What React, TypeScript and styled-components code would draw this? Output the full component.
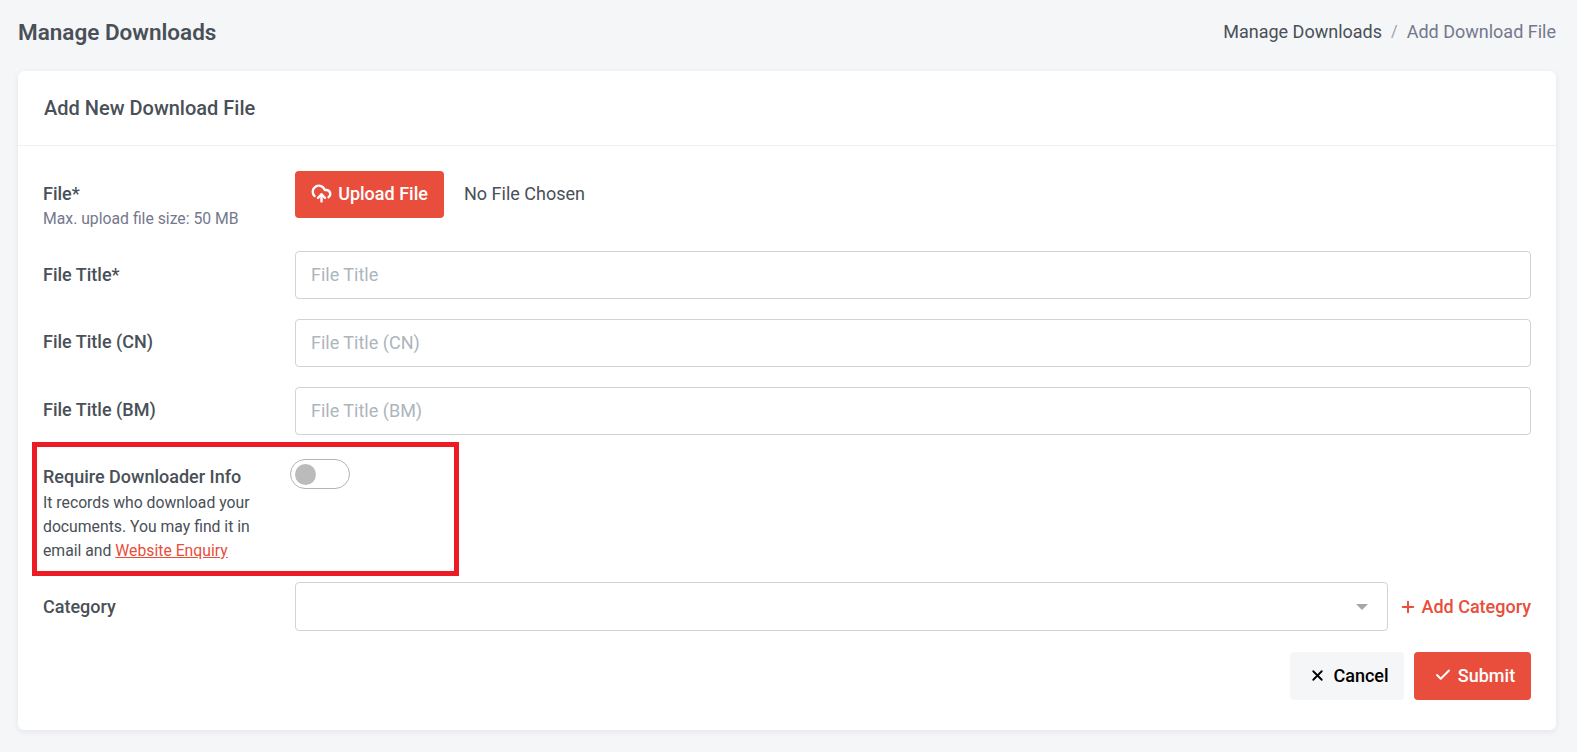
import React from "react";
import styled, { createGlobalStyle } from "styled-components";
import { Check, CloudUpload, Plus, X } from "lucide-react";

const GlobalStyle = createGlobalStyle`
  html, body {
    margin: 0;
    padding: 0;
    background: #f5f6f8;
    font-family: Roboto, "Liberation Sans", sans-serif;
    color: #495057;
  }
  * {
    box-sizing: border-box;
  }
`;

const Page = styled.div`
  height: 752px;
  overflow: hidden;
  padding: 0 21px 0 18px;
`;

const TopBar = styled.div`
  height: 71px;
  display: flex;
  align-items: center;
  justify-content: space-between;
  padding-bottom: 8px;
`;

const PageTitle = styled.h1`
  margin: 0;
  font-size: 22.5px;
  font-weight: 600;
  color: #495057;
`;

const Breadcrumb = styled.nav`
  display: flex;
  align-items: center;
  font-size: 18px;
  color: #495057;
`;

const CrumbSeparator = styled.span`
  padding: 0 9px;
  color: #9aa0ac;
  font-size: 16px;
`;

const CrumbCurrent = styled.span`
  color: #74788d;
`;

const Card = styled.section`
  background: #ffffff;
  border-radius: 6px;
  box-shadow: 0 2px 6px rgba(30, 40, 70, 0.08);
  height: 659px;
`;

const CardHeader = styled.header`
  height: 75px;
  padding: 0 26px;
  display: flex;
  align-items: center;
  border-bottom: 1px solid #eff0f3;
`;

const CardTitle = styled.h2`
  margin: 0;
  font-size: 20px;
  font-weight: 500;
  color: #495057;
`;

const CardBody = styled.div`
  padding: 25px 25px 30px;
`;

const Row = styled.div<{ $height: number }>`
  position: relative;
  display: grid;
  grid-template-columns: 252px 1fr;
  height: ${(props) => props.$height}px;
  align-items: start;
`;

const LabelColumn = styled.div<{ $top: number }>`
  padding: ${(props) => props.$top}px 22px 0 0;
`;

const FieldLabel = styled.label`
  display: block;
  font-size: 18px;
  font-weight: 500;
  line-height: 26px;
  color: #495057;
`;

const HelpText = styled.div`
  font-size: 15.75px;
  line-height: 24px;
  color: #74788d;
`;

const InfoText = styled.div`
  margin-top: 1px;
  font-size: 15.75px;
  line-height: 24px;
  color: #495057;
`;

const InfoLink = styled.a`
  color: #e94d3c;
  text-decoration: underline;
`;

const FileField = styled.div`
  display: flex;
  align-items: center;
  gap: 20px;
`;

const UploadButton = styled.button`
  height: 47px;
  width: 149px;
  display: flex;
  align-items: center;
  justify-content: center;
  gap: 6px;
  padding: 0 0 2px;
  border: none;
  border-radius: 4px;
  background: #e94d3c;
  color: #ffffff;
  font-family: inherit;
  font-size: 18px;
  font-weight: 500;
`;

const FileStatus = styled.span`
  margin-top: -2px;
  font-size: 18px;
  color: #495057;
`;

const TextInput = styled.input`
  width: 100%;
  height: 47.5px;
  border: 1px solid #ced4da;
  border-radius: 4px;
  padding: 0 15px;
  font-family: inherit;
  font-size: 18px;
  outline: none;

  &::placeholder {
    color: #adb5bd;
  }
`;

const ToggleTrack = styled.button`
  position: relative;
  display: block;
  width: 60px;
  height: 30px;
  margin: 4px 0 0 -5px;
  padding: 0;
  background: #ffffff;
  border: 1px solid #adb5bd;
  border-radius: 15px;
`;

const ToggleKnob = styled.span`
  position: absolute;
  left: 4px;
  top: 3.5px;
  width: 21px;
  height: 21px;
  border-radius: 50%;
  background: #bbbbbb;
`;

/* annotation drawn over the form in the screenshot */
const Highlight = styled.div`
  position: absolute;
  left: -11px;
  top: -13px;
  width: 427px;
  height: 134px;
  border: 5px solid #ed1c24;
  pointer-events: none;
`;

const CategoryField = styled.div`
  display: flex;
  align-items: center;
  gap: 11px;
`;

const SelectBox = styled.div`
  position: relative;
  flex: 1;
  height: 49px;
  border: 1px solid #ced4da;
  border-radius: 4px;
`;

const SelectCaret = styled.span`
  position: absolute;
  right: 19px;
  top: 21px;
  width: 0;
  height: 0;
  border-left: 6px solid transparent;
  border-right: 6px solid transparent;
  border-top: 6px solid #a6a6a6;
`;

const AddCategory = styled.a`
  display: flex;
  align-items: center;
  gap: 4px;
  font-size: 18px;
  font-weight: 500;
  color: #e94d3c;
`;

const Actions = styled.div`
  display: flex;
  justify-content: flex-end;
  gap: 10px;
`;

const ActionButton = styled.button<{ $primary?: boolean; $width: number; $gap: number }>`
  width: ${(props) => props.$width}px;
  height: 48px;
  display: flex;
  align-items: center;
  justify-content: center;
  gap: ${(props) => props.$gap}px;
  padding: 0 0 2px 4px;
  border: none;
  border-radius: 4px;
  background: ${(props) => (props.$primary ? "#e94d3c" : "#f5f6f8")};
  color: ${(props) => (props.$primary ? "#ffffff" : "#000000")};
  font-family: inherit;
  font-size: 18px;
  font-weight: 500;
`;

const titleFields = ["File Title (CN)", "File Title (BM)"];

export default function App() {
  return (
    <Page>
      <GlobalStyle />
      <TopBar>
        <PageTitle>Manage Downloads</PageTitle>
        <Breadcrumb>
          <span>Manage Downloads</span>
          <CrumbSeparator>/</CrumbSeparator>
          <CrumbCurrent>Add Download File</CrumbCurrent>
        </Breadcrumb>
      </TopBar>
      <Card>
        <CardHeader>
          <CardTitle>Add New Download File</CardTitle>
        </CardHeader>
        <CardBody>
          <Row $height={80}>
            <LabelColumn $top={10}>
              <FieldLabel>File*</FieldLabel>
              <HelpText>Max. upload file size: 50 MB</HelpText>
            </LabelColumn>
            <FileField>
              <UploadButton>
                <CloudUpload size={21} strokeWidth={2.7} />
                Upload File
              </UploadButton>
              <FileStatus>No File Chosen</FileStatus>
            </FileField>
          </Row>
          <Row $height={68}>
            <LabelColumn $top={11}>
              <FieldLabel>File Title*</FieldLabel>
            </LabelColumn>
            <TextInput placeholder="File Title" />
          </Row>
          {titleFields.map((title) => (
            <Row key={title} $height={68}>
              <LabelColumn $top={10}>
                <FieldLabel>{title}</FieldLabel>
              </LabelColumn>
              <TextInput placeholder={title} />
            </Row>
          ))}
          <Row $height={127}>
            <Highlight />
            <LabelColumn $top={9}>
              <FieldLabel>Require Downloader Info</FieldLabel>
              <InfoText>
                It records who download your documents. You may find it in email
                and <InfoLink>Website Enquiry</InfoLink>
              </InfoText>
            </LabelColumn>
            <ToggleTrack>
              <ToggleKnob />
            </ToggleTrack>
          </Row>
          <Row $height={70}>
            <LabelColumn $top={12}>
              <FieldLabel>Category</FieldLabel>
            </LabelColumn>
            <CategoryField>
              <SelectBox>
                <SelectCaret />
              </SelectBox>
              <AddCategory>
                <Plus size={18} strokeWidth={2.6} />
                Add Category
              </AddCategory>
            </CategoryField>
          </Row>
          <Actions>
            <ActionButton $width={114} $gap={7}>
              <X size={17} strokeWidth={2.6} />
              Cancel
            </ActionButton>
            <ActionButton $primary $width={117} $gap={6}>
              <Check size={18} strokeWidth={2.6} />
              Submit
            </ActionButton>
          </Actions>
        </CardBody>
      </Card>
    </Page>
  );
}
